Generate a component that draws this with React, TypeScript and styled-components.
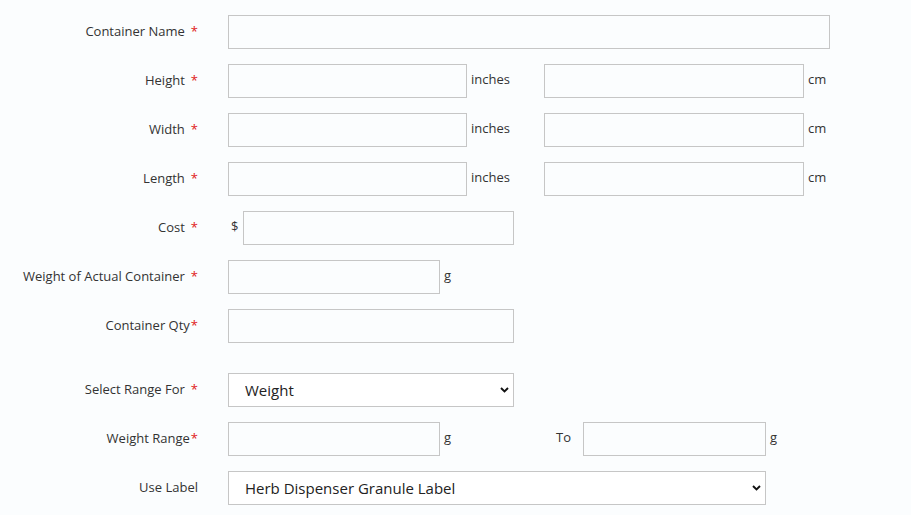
import React from "react";
import styled, { createGlobalStyle } from "styled-components";

const GlobalStyle = createGlobalStyle`
	body {
		margin: 0;
		background: #fbfdfe;
		font-family: "Open Sans", "Liberation Sans", sans-serif;
	}
`;

const Form = styled.form`
	padding-top: 15px;
	display: flex;
	flex-direction: column;
`;

const Row = styled.div<{ $gapTop?: number }>`
	display: flex;
	align-items: center;
	height: 34px;
	margin-bottom: 15px;
	margin-top: ${(p) => p.$gapTop || 0}px;
`;

const Label = styled.label`
	width: 198px;
	margin-right: 30px;
	margin-top: -2px;
	text-align: right;
	font-size: 13px;
	color: #333;
	flex-shrink: 0;
`;

const Star = styled.span<{ $tight?: boolean }>`
	color: #e02020;
	margin-left: ${(p) => (p.$tight ? 1 : 6)}px;
`;

const Input = styled.input<{ $w: number }>`
	box-sizing: border-box;
	width: ${(p) => p.$w}px;
	height: 34px;
	border: 1px solid #c6c6c6;
	background: #fbfdfe;
	padding: 0 8px;
	font-family: inherit;
	font-size: 14px;
	outline: none;
	flex-shrink: 0;
`;

const Unit = styled.span<{ $w?: number }>`
	font-size: 13px;
	color: #333;
	margin-left: 4px;
	margin-top: -4px;
	width: ${(p) => (p.$w ? `${p.$w}px` : "auto")};
	flex-shrink: 0;
`;

const Prefix = styled.span`
	font-size: 13px;
	color: #333;
	margin: -4px 5px 0 3px;
`;

const SelectWrap = styled.div<{ $w: number }>`
	position: relative;
	width: ${(p) => p.$w}px;
	height: 34px;
	flex-shrink: 0;
`;

const Select = styled.select`
	box-sizing: border-box;
	appearance: none;
	width: 100%;
	height: 100%;
	border: 1px solid #c6c6c6;
	background: #ffffff;
	padding: 0 24px 0 16px;
	font-family: inherit;
	font-size: 15px;
	color: #222;
	outline: none;
	border-radius: 0;
`;

const Chevron = styled.svg`
	position: absolute;
	right: 5px;
	top: 14px;
	pointer-events: none;
`;

const ToLabel = styled.span`
	font-size: 13px;
	color: #333;
	margin-top: -4px;
	width: 27px;
	flex-shrink: 0;
`;

const Dropdown = ({ w, value, options }: { w: number; value: string; options: string[] }) => (
	<SelectWrap $w={w}>
		<Select defaultValue={value}>
			{options.map((o) => (
				<option key={o}>{o}</option>
			))}
		</Select>
		<Chevron width="9" height="6" viewBox="0 0 9 6">
			<path d="M1 1 L4.5 4.5 L8 1" fill="none" stroke="#111" strokeWidth="1.9" />
		</Chevron>
	</SelectWrap>
);

const dims = ["Height", "Width", "Length"];

const App = () => {
	return (
		<>
			<GlobalStyle />
			<Form>
				<Row>
					<Label>
						Container Name<Star>*</Star>
					</Label>
					<Input $w={602} />
				</Row>
				{dims.map((d) => (
					<Row key={d}>
						<Label>
							{d}
							<Star>*</Star>
						</Label>
						<Input $w={239} />
						<Unit $w={73}>inches</Unit>
						<Input $w={260} />
						<Unit>cm</Unit>
					</Row>
				))}
				<Row>
					<Label>
						Cost<Star>*</Star>
					</Label>
					<Prefix>$</Prefix>
					<Input $w={271} />
				</Row>
				<Row>
					<Label>
						Weight of Actual Container<Star>*</Star>
					</Label>
					<Input $w={212} />
					<Unit>g</Unit>
				</Row>
				<Row>
					<Label>
						Container Qty<Star $tight>*</Star>
					</Label>
					<Input $w={286} />
				</Row>
				<Row $gapTop={15}>
					<Label>
						Select Range For<Star>*</Star>
					</Label>
					<Dropdown w={286} value="Weight" options={["Weight", "Volume"]} />
				</Row>
				<Row>
					<Label>
						Weight Range<Star $tight>*</Star>
					</Label>
					<Input $w={212} />
					<Unit $w={112}>g</Unit>
					<ToLabel>To</ToLabel>
					<Input $w={183} />
					<Unit>g</Unit>
				</Row>
				<Row>
					<Label>Use Label</Label>
					<Dropdown
						w={538}
						value="Herb Dispenser Granule Label"
						options={["Herb Dispenser Granule Label", "Standard Label"]}
					/>
				</Row>
			</Form>
		</>
	);
};

export default App;
